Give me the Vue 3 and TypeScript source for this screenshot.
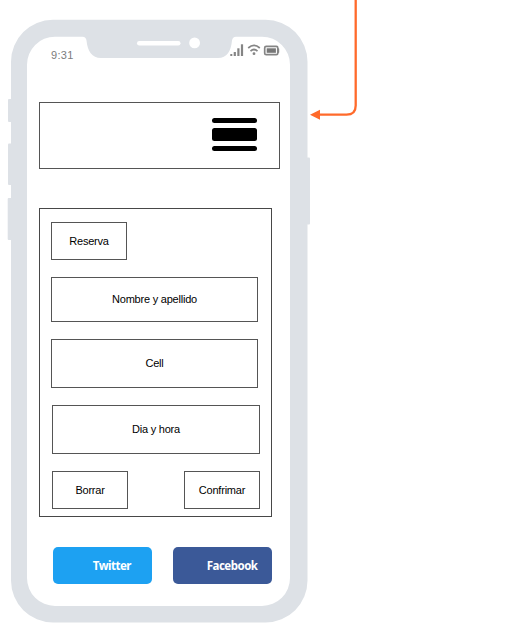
<script setup lang="ts">
interface Field {
  id: string
  label: string
}

const fields: Field[] = [
  { id: 'name', label: 'Nombre y apellido' },
  { id: 'cell', label: 'Cell' },
  { id: 'date', label: 'Dia y hora' },
]

const socials: Field[] = [
  { id: 'twitter', label: 'Twitter' },
  { id: 'facebook', label: 'Facebook' },
]
</script>

<template>
  <main class="canvas">
    <svg class="artwork" width="527" height="638" viewBox="0 0 527 638" aria-hidden="true">
      <g fill="#dde1e6">
        <rect x="8" y="99" width="6" height="23" rx="1" />
        <rect x="8" y="143.500" width="6" height="41.500" rx="1" />
        <rect x="7.700" y="198" width="6" height="42" rx="1" />
        <rect x="304" y="157.500" width="6" height="67" rx="1" />
        <path
          fill-rule="evenodd"
          d="M53 19.700H265.500A42 42 0 0 1 307.500 61.700V580.500A42 42 0 0 1 265.500 622.500H53A42 42 0 0 1 11 580.500V61.700A42 42 0 0 1 53 19.700Z
             M55 36.700A28 28 0 0 0 27 64.700V578A28 28 0 0 0 55 606H262A28 28 0 0 0 290 578V64.700A28 28 0 0 0 262 36.700H236Q232.500 36.700 232 40.500C231 51 227 58 218 58H101C92 58 87.500 51 86.500 40.500Q86 36.700 82.500 36.700Z"
        />
      </g>
      <rect x="137" y="41" width="43.500" height="4.500" rx="2.250" fill="#fff" />
      <circle cx="194.600" cy="42.900" r="5.400" fill="#fff" />
      <path d="M355.700 0V105.500Q355.700 114.700 346.500 114.700H318" fill="none" stroke="#ff6a2b" stroke-width="2.300" />
      <path d="M310 114.700L320 109.700V119.700Z" fill="#ff6a2b" />
    </svg>

    <section class="screen">
      <div class="status">
        <span class="time">9:31</span>
        <svg class="indicators" width="50" height="14" viewBox="0 0 50 14" aria-hidden="true">
          <g fill="#858585">
            <rect x="0.300" y="10" width="2" height="2" />
            <rect x="3.700" y="8" width="2.200" height="4" />
            <rect x="7.300" y="4.300" width="2.200" height="7.700" />
            <rect x="10.900" y="0.300" width="2.200" height="11.700" />
            <circle cx="24" cy="9.700" r="1.400" />
          </g>
          <g fill="none" stroke="#858585" stroke-width="1.700">
            <path d="M18.200 4Q24 -1.300 29.800 4" />
            <path d="M20.500 7.100Q24 3.900 27.500 7.100" />
            <rect x="34.700" y="2.400" width="13.100" height="8.300" rx="1.500" />
          </g>
          <rect x="36.700" y="4.300" width="9.200" height="4.500" fill="#777" />
          <rect x="48" y="4.300" width="1.200" height="4.600" rx="0.600" fill="#858585" />
        </svg>
      </div>

      <header class="topbar">
        <div class="burger">
          <span class="bar" />
          <span class="bar thick" />
          <span class="bar" />
        </div>
      </header>

      <section class="form">
        <div class="box small">Reserva</div>
        <div v-for="field in fields" :key="field.id" class="box" :class="field.id">{{ field.label }}</div>
        <div class="actions">
          <div class="box small">Borrar</div>
          <div class="box small">Confrimar</div>
        </div>
      </section>

      <footer class="socials">
        <div v-for="item in socials" :key="item.id" class="social" :class="item.id">{{ item.label }}</div>
      </footer>
    </section>
  </main>
</template>

<style>
body {
  background: #fff;
}
</style>

<style scoped>
.canvas {
  position: relative;
  width: 527px;
  height: 638px;
  overflow: hidden;
  box-sizing: border-box;
  padding: 37px 0 0 27px;
  font-family: "Liberation Sans", Arial, sans-serif;
  font-size: 11px;
  color: #000;
}

.canvas * {
  box-sizing: border-box;
}

.artwork {
  position: absolute;
  top: 0;
  left: 0;
}

.screen {
  position: relative;
  display: flex;
  flex-direction: column;
  width: 263px;
}

.status {
  display: flex;
  justify-content: space-between;
  height: 65px;
  padding: 7px 10px 0 24px;
  color: #7c7c7c;
}

.time {
  padding-top: 5px;
  line-height: 13px;
  letter-spacing: 0.3px;
}

.topbar {
  display: flex;
  justify-content: flex-end;
  width: 241px;
  height: 67px;
  margin-left: 12px;
  padding: 15px 22px 0 0;
  border: 1px solid #555;
}

.burger {
  display: flex;
  flex-direction: column;
  gap: 5px;
  width: 45.5px;
}

.bar {
  height: 5px;
  border-radius: 2.5px;
  background: #000;
}

.thick {
  height: 13px;
}

.form {
  display: flex;
  flex-direction: column;
  width: 233px;
  height: 309px;
  margin: 39px 0 0 12px;
  padding: 13px 0 0 11px;
  border: 1px solid #484848;
}

.box {
  display: flex;
  align-items: center;
  justify-content: center;
  flex: none;
  width: 207px;
  border: 1px solid #555;
  letter-spacing: -0.22px;
}

.small {
  width: 76px;
  height: 38px;
}

.name {
  height: 45px;
  margin-top: 17px;
  padding-bottom: 2px;
}

.cell {
  height: 49px;
  margin-top: 17px;
  padding-bottom: 2px;
}

.date {
  width: 208px;
  height: 49px;
  margin: 17px 0 0 1px;
  padding-bottom: 2px;
}

.actions {
  display: flex;
  justify-content: space-between;
  width: 208px;
  margin: 17px 0 0 1px;
}

.socials {
  display: flex;
  gap: 21px;
  margin: 30px 0 0 25.500px;
}

.social {
  display: flex;
  align-items: center;
  justify-content: flex-end;
  width: 99px;
  height: 37px;
  border-radius: 5px;
  font: bold 11.5px "Noto Sans", "Open Sans", sans-serif;
  letter-spacing: -0.5px;
  color: #fff;
}

.twitter {
  padding-right: 20.500px;
  background: #1da1f2;
}

.facebook {
  padding-right: 14px;
  background: #3b5998;
}
</style>
